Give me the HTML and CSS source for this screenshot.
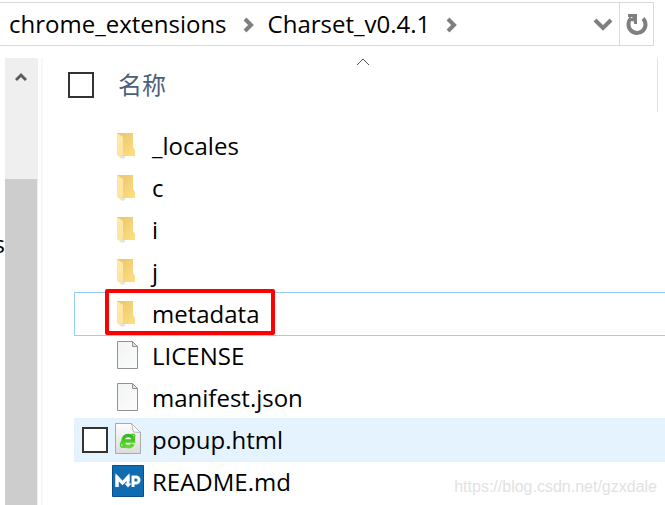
FILE: index.html
```html
<!DOCTYPE html>
<html lang="zh-CN">
<head>
<meta charset="utf-8">
<title>Charset_v0.4.1</title>
<link rel="stylesheet" href="styles.css">
</head>
<body>
<svg class="defs" width="0" height="0" aria-hidden="true">
  <defs>
    <linearGradient id="back" x1="0" y1="0" x2="1" y2="1"><stop offset="0" stop-color="#e9c46a"/><stop offset="1" stop-color="#ffdf85"/></linearGradient>
    <linearGradient id="flap" x1="0" y1="0" x2="0" y2="1"><stop offset="0" stop-color="#ffe9a6"/><stop offset="1" stop-color="#fbe4a0"/></linearGradient>
    <linearGradient id="paper" x1="0" y1="0" x2="1" y2="1"><stop offset="0" stop-color="#f2f3f4"/><stop offset="1" stop-color="#fbfcfc"/></linearGradient>
    <linearGradient id="grey" x1="0" y1="0" x2="0" y2="1"><stop offset="0" stop-color="#fdfdfd"/><stop offset="1" stop-color="#dcdcdc"/></linearGradient>
    <linearGradient id="green" x1="0" y1="0" x2="0" y2="1"><stop offset="0" stop-color="#2fb81f"/><stop offset="1" stop-color="#63dc2c"/></linearGradient>
    <symbol id="folder" viewBox="0 0 32 32">
      <path d="M5 4h16v14l2 3v6H10L5 21z" fill="url(#back)"/>
      <path d="M10 30l3-1v-2h-3z" fill="#e4e4e4"/>
      <path d="M5 4l6 4v18h-1v4l-5-4z" fill="url(#flap)"/>
    </symbol>
    <symbol id="file" viewBox="0 0 32 32">
      <path d="M5.500 2.500h15l5 5v22h-20z" fill="url(#paper)" stroke="#929292"/>
      <path d="M20.500 2.500v5h5z" fill="#e2e2e2" stroke="#929292"/>
    </symbol>
  </defs>
</svg>
<header class="address">
  <nav class="crumbs" aria-label="路径">
    <a href="#">chrome_extensions</a>
    <svg class="sep" viewBox="0 0 12 16" aria-hidden="true"><path d="M2 2l6 6-6 6"/></svg>
    <a href="#">Charset_v0.4.1</a>
    <svg class="sep" viewBox="0 0 12 16" aria-hidden="true"><path d="M2 2l6 6-6 6"/></svg>
  </nav>
  <button class="history" type="button" aria-label="历史记录"><svg width="20" height="14" viewBox="0 0 20 14"><path d="M2 3l8 8 8-8"/></svg></button>
  <button class="refresh" type="button" aria-label="刷新"><svg width="22" height="24" viewBox="0 0 22 24"><path d="M17 6.500a8.500 8.500 0 1 1-11.500-.5"/><path d="M2 3.500h7.500V12M9 4L6 9" stroke-width="3"/></svg></button>
</header>
<main class="explorer">
  <aside class="tree"><span>s</span></aside>
  <div class="scroll">
    <button type="button" aria-label="向上滚动"><svg width="12" height="10" viewBox="0 0 12 10"><path d="M1 8l5-5 5 5"/></svg></button>
    <div class="thumb"></div>
  </div>
  <section class="files">
    <div class="head">
      <input type="checkbox" aria-label="全选">
      <span class="title">名称</span>
      <svg class="sort" width="14" height="8" viewBox="0 0 14 8" aria-hidden="true"><path d="M1 7l6-6 6 6"/></svg>
    </div>
    <ul class="list">
      <li><svg class="icon"><use href="#folder"/></svg><span>_locales</span></li>
      <li><svg class="icon"><use href="#folder"/></svg><span>c</span></li>
      <li><svg class="icon"><use href="#folder"/></svg><span>i</span></li>
      <li><svg class="icon"><use href="#folder"/></svg><span>j</span></li>
      <li class="focused"><svg class="icon"><use href="#folder"/></svg><span>metadata</span></li>
      <li><svg class="icon"><use href="#file"/></svg><span>LICENSE</span></li>
      <li><svg class="icon"><use href="#file"/></svg><span>manifest.json</span></li>
      <li class="hovered"><input type="checkbox" aria-label="popup.html">
        <svg class="icon" viewBox="0 0 32 32">
          <path d="M3.500.5h16l9 9v21h-25z" fill="url(#grey)" stroke="#a9a9a9"/>
          <path d="M19.500.5l2 8.500 7 .5z" fill="#fff" stroke="#b5b5b5"/>
          <path d="M11 18h10.500c0-7.500-10.500-7.500-10.500 0 0 7 8 7 10 3" fill="none" stroke="url(#green)" stroke-width="3.500"/>
          <path d="M19 12c3-2 5 0 2.500 4M10 18c-3 5-1 8 4 5" fill="none" stroke="#4fcb2b" stroke-width="1.500"/>
        </svg><span>popup.html</span></li>
      <li>
        <svg class="icon" viewBox="0 0 32 32">
          <path d="M.5.5h31v31H.5z" fill="#106cb1" stroke="#0b4f86"/>
          <path d="M5 22V12l5.500 6 5.500-6v8M21 22V12h3a3 3 0 0 1 0 6h-3" fill="none" stroke="#fff" stroke-width="3"/>
          <path d="M3.500 22V10.500h2l5 5.500 5-5.500h2V16h-3l-4 4-4-4v6z" fill="#fff"/>
          <path d="M12.500 18.500h7L16 22.500z" fill="#fff"/>
        </svg><span>README.md</span></li>
    </ul>
  </section>
  <div class="watermark">https://blog.csdn.net/gzxdale</div>
</main>
</body>
</html>
```
FILE: styles.css
```css
*, *::after { box-sizing: border-box; }
body {
  margin: 0;
  height: 100vh;
  padding-top: 2px;
  display: flex;
  flex-direction: column;
  overflow: hidden;
  background: #fff;
  color: #000;
  font: 24px/42px "Segoe UI", "Open Sans", "Noto Sans CJK SC", sans-serif;
}
.defs { position: absolute; }
button { border: 0; padding: 0; background: none; display: flex; align-items: center; justify-content: center; }
button svg, .sep { fill: none; stroke: #7f7f7f; stroke-width: 4; }
.address {
  flex: none;
  display: flex;
  height: 44px;
  margin-right: 11px;
  border: 1px solid #d9d9d9;
  border-left: 0;
}
.crumbs { flex: 1; display: flex; align-items: center; padding-left: 9px; }
.crumbs a { color: inherit; text-decoration: none; }
.sep { width: 12px; height: 16px; margin: 2px 13px 0 16px; }
.history { width: 32px; }
.refresh { width: 34px; border-left: 1px solid #d9d9d9; }
.explorer { position: relative; flex: 1; min-height: 0; display: flex; padding-top: 12px; }
.tree { width: 5px; overflow: hidden; padding-top: 165px; display: flex; justify-content: flex-end; }
.scroll {
  flex: none;
  width: 33px;
  display: flex;
  flex-direction: column;
  padding-right: 1px;
  background: #efefef;
}
.scroll button { height: 38px; }
.scroll button svg { stroke: #5c5c5c; stroke-width: 3; }
.thumb { flex: 1; margin-top: 83px; background: #cdcdcd; }
.files { flex: 1; margin-left: 3px; border-left: 2px solid #f7f7f7; min-width: 0; }
.head {
  position: relative;
  display: flex;
  align-items: center;
  gap: 24px;
  height: 54px;
  margin-right: 7px;
  padding-left: 25px;
  border-right: 1px solid #e2e2e2;
}
input {
  appearance: none;
  flex: none;
  width: 26px;
  height: 26px;
  margin: 0;
  border: 2px solid #333;
  background: #fff;
}
.title { color: #4c607a; }
.sort { position: absolute; left: calc(50% + 6px); top: 0; fill: none; stroke: #555; }
.list { list-style: none; margin: 13px 0 0 32px; padding: 0; }
.list li {
  position: relative;
  display: grid;
  grid-template-columns: 26px 32px 1fr;
  column-gap: 4px;
  align-items: center;
  height: 42px;
  padding-left: 7px;
}
.icon { grid-column: 2; width: 32px; height: 32px; margin-bottom: 2px; }
.list span { grid-column: 3; padding-left: 4px; }
.focused { box-shadow: 0 0 0 1px #99cdf8; }
.focused::after {
  content: "";
  position: absolute;
  left: 30px;
  top: -4px;
  width: 170px;
  height: 46px;
  border: 4px solid #fe0000;
  border-radius: 2px;
}
.hovered { background: #e5f3ff; box-shadow: 0 0 0 1px #e5f3ff; }
.watermark {
  position: absolute;
  right: 8px;
  bottom: 8px;
  color: #e2e2e2;
  font: 16px/20px "Liberation Sans", sans-serif;
}
```
